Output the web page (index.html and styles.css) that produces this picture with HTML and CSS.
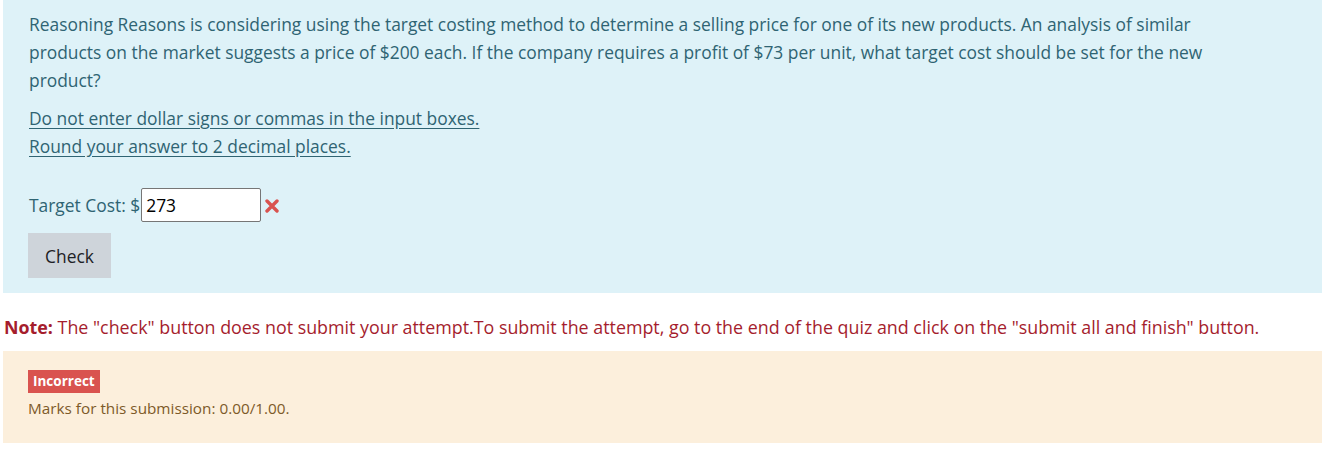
FILE: index.html
```html
<!DOCTYPE html>
<html>
<head>
<meta charset="utf-8">
<link rel="stylesheet" href="styles.css">
</head>
<body>
<div class="que">
  <div class="formulation">
    <p class="qtext">Reasoning Reasons is considering using the target costing method to determine a selling price for one of its new products. An analysis of similar products on the market suggests a price of $200 each. If the company requires a profit of $73 per unit, what target cost should be set for the new product?</p>
    <p class="hint"><u>Do not enter dollar signs or commas in the input boxes.</u><br><u>Round your answer to 2 decimal places.</u></p>
    <div class="answer">
      <span class="label">Target Cost: $</span><input class="box" type="text" value="273"><svg class="xicon" width="14" height="14" viewBox="0 0 14 14"><path d="M2 2 L12 12 M12 2 L2 12" stroke="#d9534f" stroke-width="3.4" stroke-linecap="round"/></svg>
    </div>
    <button class="check">Check</button>
  </div>
  <p class="note"><b>Note:</b> The "check" button does not submit your attempt.To submit the attempt, go to the end of the quiz and click on the "submit all and finish" button.</p>
  <div class="outcome">
    <span class="badge">Incorrect</span>
    <div class="marks">Marks for this submission: 0.00/1.00.</div>
  </div>
</div>
</body>
</html>
```

FILE: styles.css
```css
html, body {
  margin: 0;
  padding: 0;
  background: #ffffff;
}
body {
  font-family: "Open Sans", "Noto Sans", sans-serif;
  font-size: 17.4px;
  line-height: 28px;
}
.que {
  width: 1319px;
  margin-left: 3px;
}
.formulation {
  background: #def2f8;
  color: #2f6473;
  padding: 10px 70px 15px 26px;
}
.qtext {
  margin: 0 0 10px 0;
}
.hint {
  margin: 0;
}
.hint u {
  text-underline-offset: 3px;
}
.answer {
  display: flex;
  align-items: center;
  margin-top: 28px;
  height: 34px;
}
.label {
  color: #2f6473;
}
.box {
  width: 120px;
  height: 34px;
  box-sizing: border-box;
  border: 1px solid #767676;
  border-radius: 2px;
  font-family: "Open Sans", "Noto Sans", sans-serif;
  font-size: 17.4px;
  color: #000;
  padding: 0 4px;
  margin: 0 0 0 1px;
  background: #fff;
}
.xicon {
  margin-left: 4px;
  margin-top: 2px;
}
.check {
  display: block;
  margin-top: 11px;
  margin-left: -1px;
  width: 83px;
  height: 45px;
  background: #ced4da;
  border: none;
  border-radius: 0;
  color: #1d2125;
  font-family: "Open Sans", "Noto Sans", sans-serif;
  font-size: 17.4px;
  padding: 0;
}
.note {
  margin: 0 0 0 -1px;
  padding: 20px 0 10px 2px;
  color: #a51d2d;
  font-size: 17.85px;
}
.note b {
  font-weight: 700;
}
.outcome {
  display: flex;
  flex-direction: column;
  align-items: flex-start;
  background: #fcefdc;
  color: #7d5a29;
  height: 92px;
  box-sizing: border-box;
  padding: 19px 25px 0 25px;
}
.badge {
  display: block;
  background: #d9534f;
  color: #fff;
  font-weight: 700;
  font-size: 13.5px;
  line-height: 23px;
  height: 23px;
  padding: 0 5px;
}
.marks {
  font-size: 15.3px;
  line-height: 30px;
}
```
